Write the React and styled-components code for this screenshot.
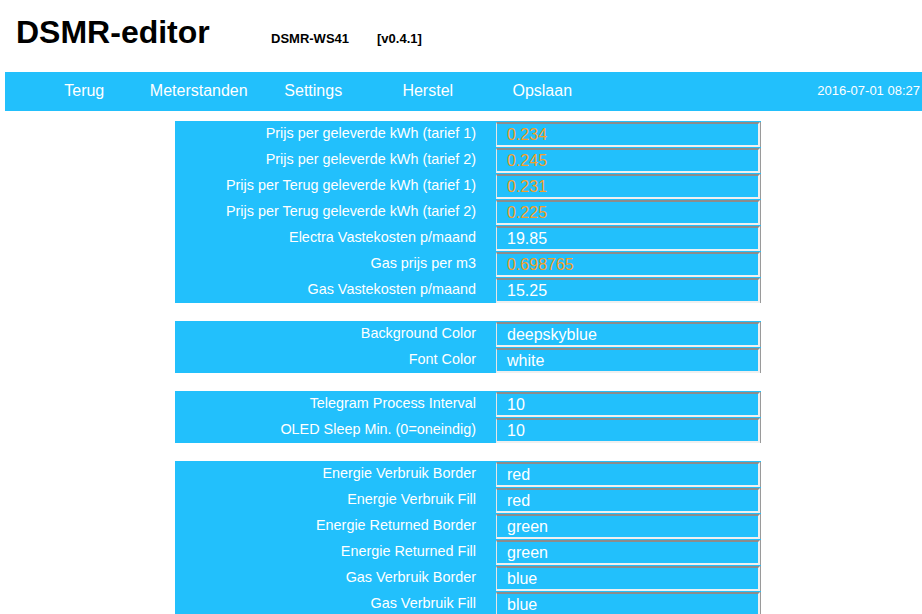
import React from "react";
import styled, { createGlobalStyle } from "styled-components";

const Global = createGlobalStyle`
  html, body { margin: 0; padding: 0; background: #fff; }
  body { font-family: "Liberation Sans", Arial, sans-serif; }
`;

const BLUE = "#22c0fc";

const Page = styled.div`
  width: 922px;
  height: 614px;
  overflow: hidden;
`;

const Header = styled.header`
  display: flex;
  align-items: baseline;
  height: 72px;
  padding-left: 16px;
  box-sizing: border-box;
  padding-top: 14px;
`;

const Title = styled.h1`
  margin: 0;
  font-size: 32px;
  font-weight: bold;
  color: #000;
  width: 255px;
`;

const Meta = styled.span`
  font-size: 13px;
  font-weight: bold;
  color: #000;
  margin-right: ${(p) => p.$gap || 0}px;
`;

const Nav = styled.nav`
  margin-left: 5px;
  height: 39px;
  background: ${BLUE};
  display: flex;
  align-items: center;
  padding-left: 22px;
  padding-right: 2px;
  padding-bottom: 2px;
  box-sizing: border-box;
`;

const NavItem = styled.a`
  width: 114.5px;
  text-align: center;
  font-size: 16px;
  color: #fff;
  text-decoration: none;
`;

const Clock = styled.span`
  margin-left: auto;
  font-size: 13px;
  color: #fff;
`;

const Content = styled.main`
  padding: 10px 0 0 175px;
  display: flex;
  flex-direction: column;
  gap: 18px;
`;

const Table = styled.div`
  width: 586px;
  background: ${BLUE};
  display: grid;
  grid-template-columns: 321px 264px;
  row-gap: 1px;
  padding-top: 1px;
`;

const Label = styled.div`
  height: 25px;
  font-size: 14.4px;
  color: #fff;
  text-align: right;
  padding-right: 20px;
  line-height: 22px;
  white-space: nowrap;
`;

const Field = styled.div`
  height: 25px;
  box-sizing: border-box;
  border-top: 2px solid #8c8c8c;
  border-left: 1px solid #e6e6e6;
  border-right: 2px solid #f0f0f0;
  border-bottom: 2px solid #f0f0f0;
  box-shadow: 1px 0 0 #9a9a9a;
  background: ${BLUE};
  color: ${(p) => (p.$num ? "#f5a02a" : "#fff")};
  font-size: 16px;
  padding-left: 10px;
  line-height: 22px;
`;

const groups = [
  [
    ["Prijs per geleverde kWh (tarief 1)", "0.234", true],
    ["Prijs per geleverde kWh (tarief 2)", "0.245", true],
    ["Prijs per Terug geleverde kWh (tarief 1)", "0.231", true],
    ["Prijs per Terug geleverde kWh (tarief 2)", "0.225", true],
    ["Electra Vastekosten p/maand", "19.85"],
    ["Gas prijs per m3", "0.698765", true],
    ["Gas Vastekosten p/maand", "15.25"],
  ],
  [
    ["Background Color", "deepskyblue"],
    ["Font Color", "white"],
  ],
  [
    ["Telegram Process Interval", "10"],
    ["OLED Sleep Min. (0=oneindig)", "10"],
  ],
  [
    ["Energie Verbruik Border", "red"],
    ["Energie Verbruik Fill", "red"],
    ["Energie Returned Border", "green"],
    ["Energie Returned Fill", "green"],
    ["Gas Verbruik Border", "blue"],
    ["Gas Verbruik Fill", "blue"],
  ],
];

export default function App() {
  return (
    <Page>
      <Global />
      <Header>
        <Title>DSMR-editor</Title>
        <Meta $gap={28}>DSMR-WS41</Meta>
        <Meta>[v0.4.1]</Meta>
      </Header>
      <Nav>
        <NavItem>Terug</NavItem>
        <NavItem>Meterstanden</NavItem>
        <NavItem>Settings</NavItem>
        <NavItem>Herstel</NavItem>
        <NavItem>Opslaan</NavItem>
        <Clock>2016-07-01 08:27</Clock>
      </Nav>
      <Content>
        {groups.map((g, i) => (
          <Table key={i}>
            {g.map(([l, v, n]) => (
              <React.Fragment key={l}>
                <Label>{l}</Label>
                <Field $num={n}>{v}</Field>
              </React.Fragment>
            ))}
          </Table>
        ))}
      </Content>
    </Page>
  );
}
